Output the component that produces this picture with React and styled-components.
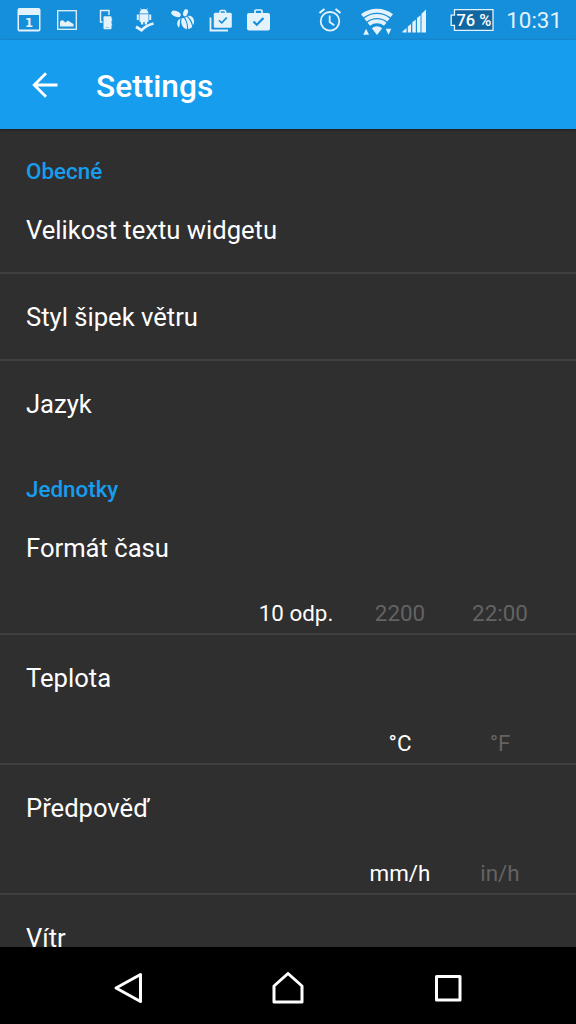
import React from 'react';
import styled, { createGlobalStyle } from 'styled-components';

const SECTIONS = [
    {
        title: 'Obecné',
        items: [
            { label: 'Velikost textu widgetu' },
            { label: 'Styl šipek větru' },
            { label: 'Jazyk' },
        ],
    },
    {
        title: 'Jednotky',
        items: [
            { label: 'Formát času', options: ['10 odp.', '2200', '22:00'] },
            { label: 'Teplota', options: ['°C', '°F'] },
            { label: 'Předpověď', options: ['mm/h', 'in/h'] },
            { label: 'Vítr' },
        ],
    },
];

const CalendarIcon = () => (
    <Icon width="24" height="24" viewBox="0 0 24 24">
        <path
            d="M2.5 0h19a2 2 0 0 1 2 2v19.500a2 2 0 0 1-2 2h-19a2 2 0 0 1-2-2V2a2 2 0 0 1 2-2zM2 7v14.500h20V7z"
            fillRule="evenodd"
        />
        <text x="12" y="18.500" textAnchor="middle" fontSize="11.500" fontWeight="700" fontFamily="DejaVu Sans">
            1
        </text>
    </Icon>
);

const PictureIcon = () => (
    <Icon width="20" height="20" viewBox="0 0 20 20" $gap={16}>
        <rect x="0.700" y="0.700" width="18.600" height="18.600" fill="none" stroke="currentColor" strokeWidth="1.300" />
        <path d="M3 16.500v-5l2.500-1.500 3 2.500 2.500-2 2 1.500 3.500 2v2.500z" />
    </Icon>
);

const DevicesIcon = () => (
    <Icon width="14" height="22" viewBox="0 0 14 22" $gap={22}>
        <path d="M3.500 13H1.500V1.500h8.500V6" fill="none" stroke="currentColor" strokeWidth="1.400" />
        <rect x="4.500" y="7.300" width="8" height="13" rx="1" />
        <path d="M12.300 9.500h.8v2.500h-.8zM12.300 14.500h.8v2h-.8z" />
        <path d="M6.500 18.500h3.500" stroke="#168fda" strokeWidth="0.400" />
    </Icon>
);

const AndroidIcon = () => (
    <Icon width="22" height="24" viewBox="0 0 22 24" $gap={22}>
        <path d="M4.500 5.500a4.500 4.500 0 0 1 9 0zM4.500 6.200h9V13a1.200 1.200 0 0 1-1.200 1.200H5.700A1.200 1.200 0 0 1 4.500 13zM1.800 6.500h2V12h-2zM14.200 6.500h2V12h-2zM6 14h2.200v2.500H6zM9.800 14H12v2.500H9.800z" />
        <path d="M5.500 0.500l1.500 2M12.500 0.500l-1.500 2" stroke="currentColor" strokeWidth="0.800" />
        <path d="M1 18.800l5.500 3.400Q11 17.500 18.500 15.500" fill="none" stroke="currentColor" strokeWidth="2.800" />
    </Icon>
);

const BeeIcon = () => (
    <Icon width="24" height="22" viewBox="0 0 24 22" $gap={14}>
        <ellipse cx="5" cy="4.800" rx="5" ry="2.800" transform="rotate(22 5 4.800)" />
        <ellipse cx="14.500" cy="3.700" rx="2.300" ry="3.700" transform="rotate(20 14.500 3.700)" />
        <path d="M9.500 9.500C6 11 5 15.500 8 18.800 9.300 16 8.500 12.500 9.500 9.500z" />
        <path d="M10.700 9.300c-1.200 4.500-.2 9 5 11.200 1-3.500-.5-8-2.700-11.500z" />
        <path d="M14 8.300c1.800 3.200 3.200 7.200 3.200 11.700 1.500-.2 3-1 4-2.300-.8-4-2.800-7.500-5.200-10z" />
        <path d="M16.700 7c2.800-.8 5.800 1 6.300 4.500.2 2-.2 3.500-1 4.700-.8-3.700-2.700-6.900-5.300-9.200z" />
    </Icon>
);

const BagsIcon = () => (
    <Icon width="23" height="23" viewBox="0 0 23 23" $gap={14}>
        <path d="M1.500 8.500v13h17.500" fill="none" stroke="currentColor" strokeWidth="1.800" />
        <path d="M11 4V2.500a1 1 0 0 1 1-1h3.500a1 1 0 0 1 1 1V4" fill="none" stroke="currentColor" strokeWidth="1.500" />
        <rect x="4.800" y="3.800" width="18" height="15" rx="1.500" />
        <path d="M10 11.300l2.800 2.500 5-5.300" fill="none" stroke="#168fda" strokeWidth="1.800" />
    </Icon>
);

const BagIcon = () => (
    <Icon width="23" height="22" viewBox="0 0 23 22" $gap={15}>
        <path d="M8 4V2a1 1 0 0 1 1-1h5a1 1 0 0 1 1 1v2" fill="none" stroke="currentColor" strokeWidth="1.700" />
        <rect x="0" y="4" width="23" height="17.500" rx="2" />
        <path d="M6.500 12.500l3.300 3.200 6.700-6.700" fill="none" stroke="#168fda" strokeWidth="2.200" />
    </Icon>
);

const AlarmIcon = () => (
    <Icon width="24" height="24" viewBox="0 0 24 24">
        <g fill="none" stroke="currentColor" strokeWidth="1.800">
            <circle cx="12" cy="13.300" r="9.300" />
            <path d="M11.700 7.500V14l4.500 3.200" />
            <path d="M1.500 5L6.500 1M22.500 5l-5-4" strokeWidth="2.200" />
        </g>
    </Icon>
);

const WifiIcon = () => (
    <Icon width="32" height="29" viewBox="0 0 32 29" $gap={19}>
        <g fill="none" stroke="currentColor" strokeWidth="4">
            <path d="M1.200 9.800a24 24 0 0 1 29.600 0" />
            <path d="M4.500 14a18.700 18.700 0 0 1 23 0" />
            <path d="M7.800 18.200a13.300 13.300 0 0 1 16.400 0" />
        </g>
        <path d="M10.800 22.300a8.500 8.500 0 0 1 10.400 0L16 29zM2.200 28.800l2.900-6 2.900 6zM24.700 22.800h5.600l-2.800 6z" />
    </Icon>
);

const SignalIcon = () => (
    <Icon width="25" height="25" viewBox="0 0 25 25" $gap={9}>
        <path d="M0.500 24.500v-1l4-3.500v4.500zM5.800 24.500v-6L9 16v8.500zM10.300 24.500V14.200l3.500-2.800v13.100zM15 24.500V10l3.500-2.800v17.300zM19.500 24.500V5.700l4.500-4.300v23.100z" />
    </Icon>
);

const BatteryIcon = () => (
    <Icon width="45" height="24" viewBox="0 0 45 24" $gap={23}>
        <path d="M4.500 1.700h38.500v20.600H4.500v-5H1.200V7.200h3.300z" fill="#0f66a0" stroke="currentColor" strokeWidth="1.300" />
        <text x="24" y="17.800" textAnchor="middle" fontSize="16.500" fontWeight="500" fontFamily="Roboto" fill="#fff">
            76 %
        </text>
    </Icon>
);

const App = () => (
    <Screen>
        <GlobalStyle />
        <StatusBar>
            <IconGroup>
                <CalendarIcon />
                <PictureIcon />
                <DevicesIcon />
                <AndroidIcon />
                <BeeIcon />
                <BagsIcon />
                <BagIcon />
            </IconGroup>
            <IconGroup>
                <AlarmIcon />
                <WifiIcon />
                <SignalIcon />
                <BatteryIcon />
                <Clock>10:31</Clock>
            </IconGroup>
        </StatusBar>

        <Toolbar>
            <BackButton aria-label="Back">
                <svg width="26" height="26" viewBox="0 0 26 26" fill="none" stroke="#fff" strokeWidth="2.800">
                    <path d="M25.500 13H2.500M14 1.200L2.200 13 14 24.800" />
                </svg>
            </BackButton>
            <Title>Settings</Title>
        </Toolbar>

        <List>
            {SECTIONS.map((section) => (
                <section key={section.title}>
                    <Category>{section.title}</Category>
                    {section.items.map((item) => (
                        <Row key={item.label} $tall={!!item.options}>
                            <Label>{item.label}</Label>
                            {item.options && (
                                <Options>
                                    {item.options.map((option, index) => (
                                        <Option key={option} $active={index === 0}>
                                            {option}
                                        </Option>
                                    ))}
                                </Options>
                            )}
                        </Row>
                    ))}
                </section>
            ))}
        </List>

        <NavBar>
            <NavButton aria-label="Back">
                <svg width="32" height="32" viewBox="0 0 32 32">
                    <path d="M28.500 2.500v27L4 16z" />
                </svg>
            </NavButton>
            <NavButton aria-label="Home">
                <svg width="32" height="32" viewBox="0 0 32 32">
                    <path d="M2 30V14L16 1.500 30 14v16z" />
                </svg>
            </NavButton>
            <NavButton aria-label="Recent apps">
                <svg width="32" height="32" viewBox="0 0 32 32">
                    <path d="M4.500 4.500H28V28H4.500z" />
                </svg>
            </NavButton>
        </NavBar>
    </Screen>
);

const GlobalStyle = createGlobalStyle`
    * {
        box-sizing: border-box;
    }
    body {
        margin: 0;
        background: #000;
        font-family: Roboto, sans-serif;
    }
`;

const Screen = styled.div`
    display: flex;
    flex-direction: column;
    width: 576px;
    height: 1024px;
    overflow: hidden;
    background: #2f2f2f;
    color: #fff;
`;

const StatusBar = styled.header`
    display: flex;
    justify-content: space-between;
    flex: none;
    height: 40px;
    padding: 0 14px 0 17px;
    background: #168fda;
    color: #e4f2fc;
`;

const IconGroup = styled.div`
    display: flex;
    align-items: center;
`;

const Icon = styled.svg`
    flex: none;
    margin-left: ${(props) => props.$gap || 0}px;
    fill: currentColor;
`;

const Clock = styled.span`
    margin-left: 11px;
    font-size: 22.4px;
    line-height: 42px;
`;

const Toolbar = styled.div`
    position: relative;
    display: flex;
    align-items: center;
    flex: none;
    height: 89px;
    padding: 1px 0 0 32px;
    background: #179ded;
    box-shadow: 0 1px 3px rgba(0, 0, 0, 0.4);
`;

const BackButton = styled.button`
    display: flex;
    width: 64px;
    padding: 0;
    border: 0;
    background: none;
`;

const Title = styled.h1`
    margin: 3px 0 0;
    font-size: 31.7px;
    font-weight: 500;
`;

const List = styled.main`
    flex: 1;
    min-height: 0;
    overflow: hidden;
`;

const Category = styled.h2`
    height: 58px;
    margin: 0;
    padding: 28px 26px 0;
    font-size: 22.4px;
    font-weight: 500;
    line-height: 28px;
    color: #179ded;
`;

const Row = styled.div`
    display: flex;
    flex-direction: column;
    justify-content: space-between;
    height: ${(props) => (props.$tall ? 130 : 87)}px;
    padding-top: 27px;
    border-bottom: 2px solid #3f3f3f;

    &:last-child {
        height: 86px;
        border-bottom: 0;
    }
`;

const Label = styled.div`
    padding-left: 26px;
    font-size: 25.6px;
    line-height: 32px;
`;

const Options = styled.div`
    display: flex;
    justify-content: flex-end;
    padding: 0 26px 6px 0;
`;

const Option = styled.div`
    min-width: 100px;
    font-size: 22.4px;
    line-height: 28px;
    text-align: center;
    color: ${(props) => (props.$active ? '#fff' : '#636363')};

    &:nth-last-child(3) {
        margin-right: 4px;
    }
`;

const NavBar = styled.nav`
    display: flex;
    align-items: center;
    justify-content: center;
    gap: 128px;
    flex: none;
    height: 77px;
    padding-top: 4px;
    background: #000;
`;

const NavButton = styled.button`
    display: flex;
    padding: 0;
    border: 0;
    background: none;

    path {
        fill: none;
        stroke: #fff;
        stroke-width: 3;
        stroke-linejoin: round;
    }
`;

export default App;
